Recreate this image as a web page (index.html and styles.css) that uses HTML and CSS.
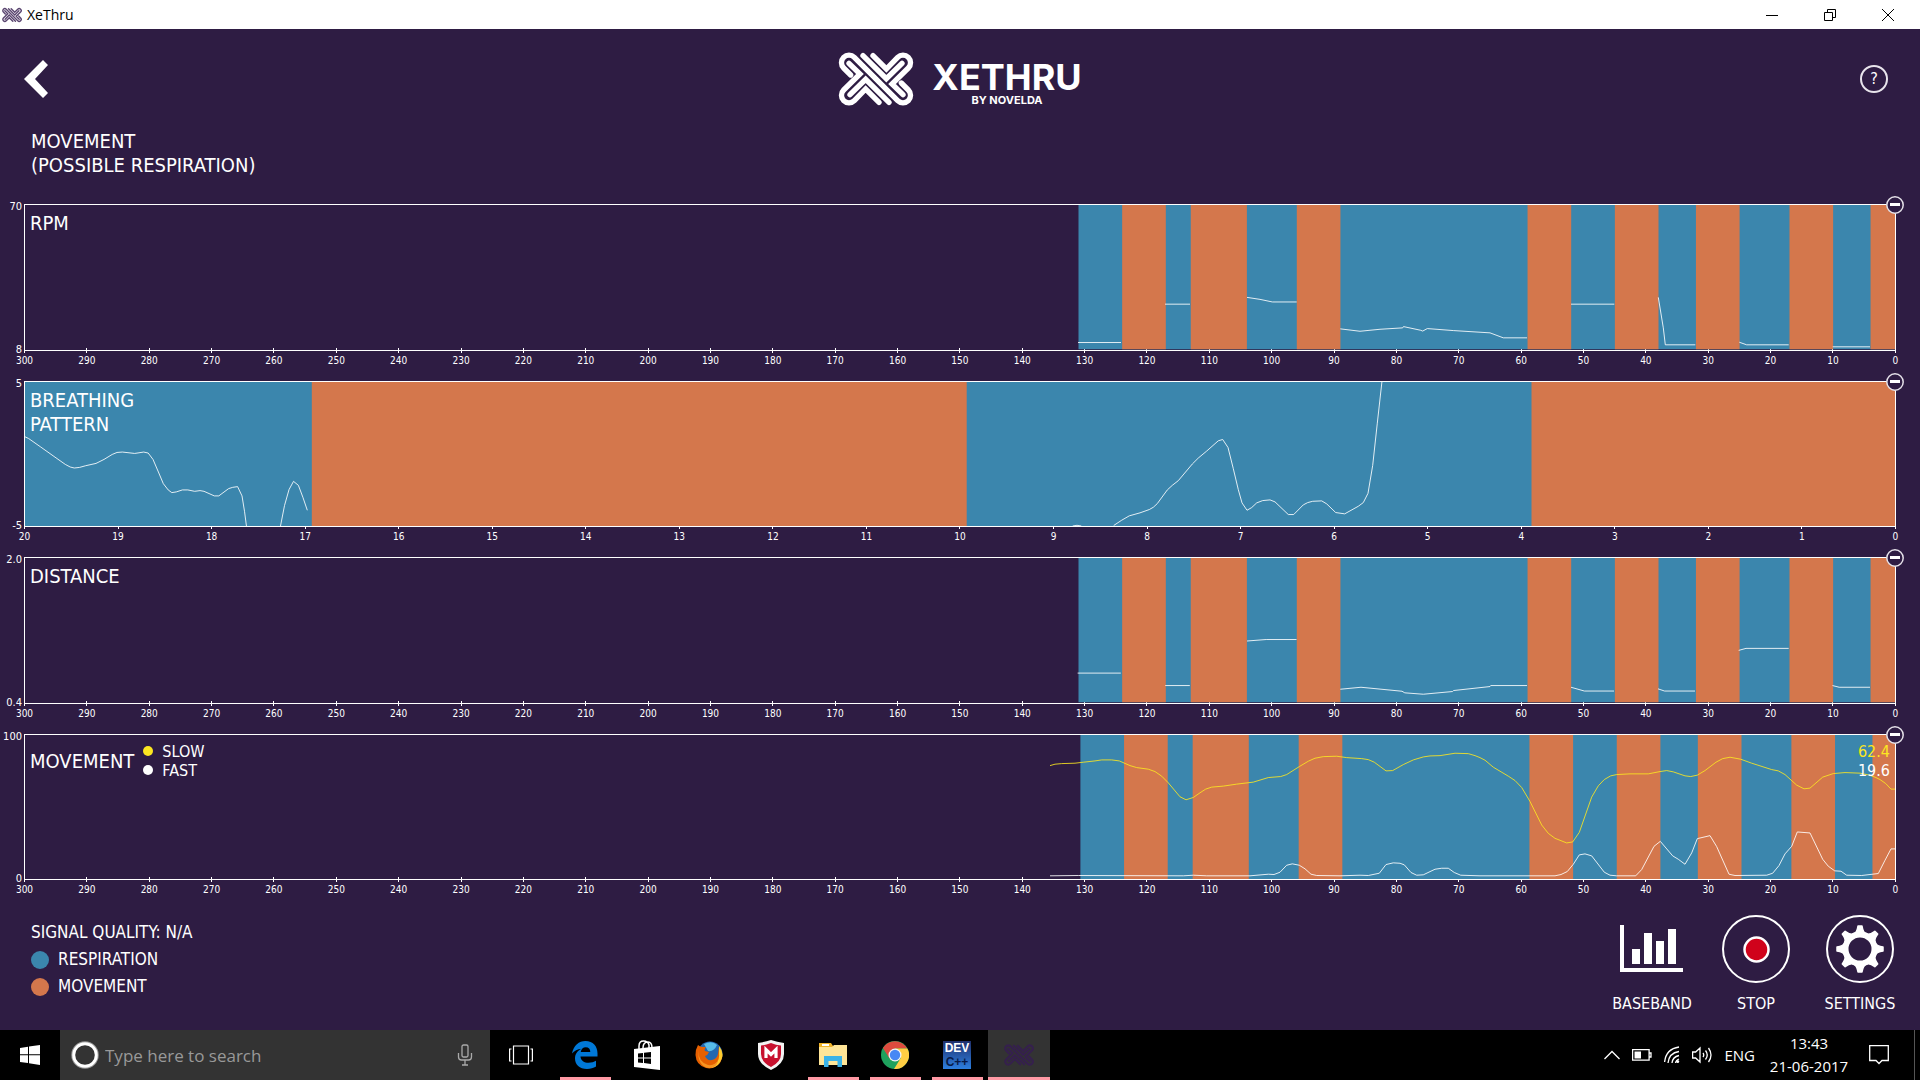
FILE: index.html
```html
<!DOCTYPE html>
<html lang="en">
<head>
<meta charset="utf-8">
<title>XeThru</title>
<link rel="stylesheet" href="styles.css">
</head>
<body>
<svg class="defs" aria-hidden="true">
  <symbol id="mark" viewBox="118 94 226 162">
    <g fill="none" stroke="currentColor" stroke-width="16" stroke-linecap="round" stroke-linejoin="miter">
      <path d="M155 163 134 142A22 22 0 0 1 166 110L296 240A22 22 0 0 0 328 208L307 187"/>
      <path d="M222 105 262 145 296 110A22 22 0 0 1 328 142L279 190 312 222"/>
      <path d="M240 245 200 205 166 240A22 22 0 0 1 134 208L183 160 150 128"/>
      <path d="M192 105 262 174 309 128M270 245 200 176 153 222"/>
    </g>
  </symbol>
  <symbol id="minus" viewBox="0 0 18 18">
    <circle cx="9" cy="9" r="8.2" fill="#2e1c43" stroke="#e4e0e8" stroke-width="1.5"/>
    <path d="M4 8.5h10" stroke="#fff" stroke-width="3"/>
  </symbol>
  <symbol id="bands" viewBox="1 0 1870 145" preserveAspectRatio="none">
    <g transform="translate(.5 0) scale(6.2367 1)">
      <path fill="#3b86ad" d="M169 0h131v145H169z"/>
      <path fill="#d4774c" d="M176 0h7v145h-7zM187 0h9v145h-9zM204 0h7v145h-7zM241 0h7v145h-7zM255 0h7v145h-7zM268 0h7v145h-7zM283 0h7v145h-7zM296 0h5v145h-5z"/>
    </g>
  </symbol>
</svg>

<header class="titlebar">
  <svg class="titlebar-icon"><use href="#mark"/></svg>
  <span class="titlebar-name">XeThru</span>
  <div class="window-controls">
    <button aria-label="Minimize"><svg width="12" height="12"><path d="M0 6.5h12"/></svg></button>
    <button aria-label="Restore"><svg width="12" height="12"><path d="M.5 3.5h8v8h-8zM3.5 3V.5h8v8H9"/></svg></button>
    <button aria-label="Close"><svg width="12" height="12"><path d="M0 0 12 12M12 0 0 12"/></svg></button>
  </div>
</header>

<main class="app">
  <div class="topbar">
    <button class="back" aria-label="Back"><svg width="24" height="38" viewBox="0 0 24 38"><path d="M24 5 19 0 0 19 19 38 24 33 11 19z" fill="#fff"/></svg></button>
    <div class="brand">
      <svg class="brand-mark"><use href="#mark"/></svg>
      <div class="brand-text"><span class="brand-name">XETHRU</span><span class="brand-by">BY NOVELDA</span></div>
    </div>
    <button class="help" aria-label="Help">?</button>
  </div>
  <h1 class="state">MOVEMENT<br>(POSSIBLE RESPIRATION)</h1>

  <div class="charts">
    <section class="chart">
      <div class="scale"><span>70</span><span>8</span></div>
      <div class="plot">
        <svg class="fill"><use href="#bands"/></svg>
        <svg class="fill" viewBox="1 1 1870 145" preserveAspectRatio="none">
          <path class="line" d="M1054 139H1097M1141 100.5H1166M1223 93.7 1236 95.7 1248.3 98.3H1272.7M1316.3 125.3 1336 127.7 1356 125.7 1378.7 124.3 1379.5 123 1396.7 126.7 1398.7 127.5 1403.3 125 1429.3 127 1466 129.3 1479.3 134.3H1503M1547 100.5H1590.3M1634.3 93.7 1639.3 124.3 1641.3 141.3H1671.3M1715.3 138.7 1722.7 141.3H1764.7M1808.7 143.3H1846"/>
        </svg>
        <h2 class="chart-title">RPM</h2>
      </div>
      <button class="collapse" aria-label="Collapse RPM"><svg><use href="#minus"/></svg></button>
      <ol class="axis"><li>300</li><li>290</li><li>280</li><li>270</li><li>260</li><li>250</li><li>240</li><li>230</li><li>220</li><li>210</li><li>200</li><li>190</li><li>180</li><li>170</li><li>160</li><li>150</li><li>140</li><li>130</li><li>120</li><li>110</li><li>100</li><li>90</li><li>80</li><li>70</li><li>60</li><li>50</li><li>40</li><li>30</li><li>20</li><li>10</li><li>0</li></ol>
    </section>

    <section class="chart">
      <div class="scale"><span>5</span><span>-5</span></div>
      <div class="plot">
        <svg class="fill" viewBox="1 1 1870 145" preserveAspectRatio="none">
          <path fill="#3b86ad" d="M0 0h1872v147H0z"/>
          <path fill="#d4774c" d="M287.8 0H942.7V147H287.8zM1507.5 0H1872V147H1507.5z"/>
          <path class="line" d="M1 56 4.6 57.7 16.8 66.3 29 75 41.3 83.7 46.2 86.3 50.3 87.3 55.6 86.7 61.7 85 72 82.7 80 78.7 88.2 73.7 93 71.7 98.4 71.3 110.7 72.7 119.7 71.3 124.2 72.3 129 78.7 134.4 91.3 139.3 103 144.2 109.3 147.8 112 152.3 111.3 158.4 109.3 163.8 109.3 170.7 110.7 176 110 180 110.7 190.3 115.3 194.8 115.3 204.6 108 208.7 106.7 213.6 106 218 115.3 220.5 130.7 222.5 146M256.4 146 260.5 125 265 109 269.5 100.7 274.4 104.7 278.9 116.7 283.3 129.7M1048.7 145.5 1053 144.8 1057.3 145.5M1089.7 145 1097.7 139.7 1105.3 135.3 1116 132.3 1125.3 129 1129.3 126.7 1133.3 123 1143.3 109.3 1148.3 104.7 1154.3 100 1168.3 83.3 1174.3 77.3 1182.7 70.3 1194.3 60 1198.7 58.7 1204 66.7 1209.3 88 1214.3 109 1218 122.3 1223 129.7 1227.7 127 1232.7 122.3 1238.7 120 1246 119.3 1251 121.3 1264.3 134 1269.7 134 1279.3 124.3 1283.7 122 1288.7 120.7 1297.7 120.3 1302.7 123.3 1311.7 132 1320.7 133.3 1334.3 125.7 1339.3 122 1344 112.7 1348.7 84.7 1353.3 42.3 1358 0"/>
        </svg>
        <h2 class="chart-title">BREATHING<br>PATTERN</h2>
      </div>
      <button class="collapse" aria-label="Collapse breathing pattern"><svg><use href="#minus"/></svg></button>
      <ol class="axis"><li>20</li><li>19</li><li>18</li><li>17</li><li>16</li><li>15</li><li>14</li><li>13</li><li>12</li><li>11</li><li>10</li><li>9</li><li>8</li><li>7</li><li>6</li><li>5</li><li>4</li><li>3</li><li>2</li><li>1</li><li>0</li></ol>
    </section>

    <section class="chart">
      <div class="scale"><span>2.0</span><span>0.4</span></div>
      <div class="plot">
        <svg class="fill"><use href="#bands"/></svg>
        <svg class="fill" viewBox="1 1 1870 145" preserveAspectRatio="none">
          <path class="line" d="M1053.6 116.5H1096.8M1141.2 129H1165.8M1223 84.3 1242.2 82.8H1272.5M1316.3 132.7 1337 130.7 1378 134.7 1380.8 136.3 1399.3 137.7 1428.5 135 1429.6 134 1466 130 1466.7 129H1503M1547 130.7 1560.4 134.5H1590M1634 132.3 1640.6 134.5H1671M1714.7 93.7 1722 91.7H1764.7M1808.5 129 1815.2 130.7H1846"/>
        </svg>
        <h2 class="chart-title">DISTANCE</h2>
      </div>
      <button class="collapse" aria-label="Collapse distance"><svg><use href="#minus"/></svg></button>
      <ol class="axis"><li>300</li><li>290</li><li>280</li><li>270</li><li>260</li><li>250</li><li>240</li><li>230</li><li>220</li><li>210</li><li>200</li><li>190</li><li>180</li><li>170</li><li>160</li><li>150</li><li>140</li><li>130</li><li>120</li><li>110</li><li>100</li><li>90</li><li>80</li><li>70</li><li>60</li><li>50</li><li>40</li><li>30</li><li>20</li><li>10</li><li>0</li></ol>
    </section>

    <section class="chart">
      <div class="scale"><span>100</span><span>0</span></div>
      <div class="plot">
        <svg class="fill" viewBox="1 1 1870 145" preserveAspectRatio="none">
          <g transform="translate(2.4 0) scale(6.2367 1)">
            <path fill="#3b86ad" d="M169 0h131v147H169z"/>
            <path fill="#d4774c" d="M176 0h7v147h-7zM187 0h9v147h-9zM204 0h7v147h-7zM241 0h7v147h-7zM255 0h7v147h-7zM268 0h7v147h-7zM283 0h7v147h-7zM296 0h5v147h-5z"/>
          </g>
          <path class="line" d="M1026 142.3 1054.3 142 1159.3 142.3 1169.3 141.7 1182.7 142.3 1226 142.3 1244.3 140.7 1250 141 1256 138.7 1262.7 131.7 1268.3 130.3 1275.3 131.7 1281 135.3 1287 140.7 1292.7 142 1316 142.3 1336 141.7 1344.3 142 1355.3 139.7 1362 131 1369.3 129.3 1376 129.7 1380.3 131.3 1387 139 1392.7 141.7 1399.3 141.3 1411 135.7 1417.7 134.7 1424.3 134.7 1430.3 139 1436.7 141.7 1456 142.3 1531 142.3 1537 141 1543.3 138 1549.3 130.7 1555.3 121.3 1561 120.3 1567.7 122.3 1580.3 138.7 1586 141.7 1592.7 142.3 1611.7 142.3 1617.7 136 1630 112.7 1636.3 107.7 1648.7 122.3 1654.3 125.7 1661 130.7 1667.7 119.3 1673.3 105 1686 102 1692.7 113 1705 140.7 1711 142 1742.7 141.7 1748.7 139.7 1755 132 1761 120.3 1767.7 112.7 1773.3 98.3 1786 99.3 1798.7 125.7 1804.3 132.7 1810.7 137.3 1817 137.7 1822.7 141.7 1837.7 142 1854.3 140 1861 126.7 1867 115.3 1871 115.3"/>
          <path class="line line-slow" d="M1026 31.7 1031 30.3 1037.7 29.7 1051 29.3 1059.3 28.3 1071 27 1077.7 26 1087.7 26 1095.3 27 1106 31.7 1112.7 33.7 1124.3 35.3 1131 37.7 1137.7 42.3 1144.3 49 1156 63 1162 66 1169.3 63.7 1176 59 1181.7 55.3 1187.7 53.3 1199.3 52.3 1212.7 50.3 1229.3 48.3 1244.3 43.7 1256.7 42.7 1262.7 40.7 1275.3 32.7 1284.3 27.3 1291 24.3 1299.3 22.7 1312.7 22.3 1322.7 23.7 1337.7 24.7 1344.3 25.7 1350.3 28.3 1362 37 1368.7 36.7 1379.3 30.7 1389.3 26 1399.3 23 1406 22 1416 21.7 1431 19.3 1444.3 19.7 1451 21.7 1456 23.7 1461 26.3 1469.3 33.3 1484.3 42.3 1491 46.7 1497.7 53.7 1506 67.7 1517.7 91.3 1524.3 99.7 1531 104.7 1542.7 109.3 1548.7 108.3 1555.3 98.7 1567.7 63.3 1574.3 52 1580.3 45.7 1586.7 42 1592.7 40.7 1606 40 1624.3 40 1636 37.7 1642.7 36.7 1649.3 38 1661 42 1666.7 42.7 1673.3 41.3 1681 36.7 1692 28.3 1698.7 24.7 1706 23.3 1716.7 25.3 1727.7 29.3 1747.7 35.7 1754.3 37 1761 40.7 1772.7 51.3 1780 55 1786 54.3 1798.7 43.3 1809.3 39.7 1821 38.7 1836 39.3 1844.3 41 1851 43.3 1856 45.7 1861.7 49.7 1867 55.3 1871 55.3"/>
        </svg>
        <div class="plot-head">
          <h2 class="plot-head-title">MOVEMENT</h2>
          <ul class="series">
            <li><i class="dot dot-slow"></i>SLOW</li>
            <li><i class="dot dot-fast"></i>FAST</li>
          </ul>
          <div class="readout"><span class="readout-slow">62.4</span><span>19.6</span></div>
        </div>
      </div>
      <button class="collapse" aria-label="Collapse movement"><svg><use href="#minus"/></svg></button>
      <ol class="axis"><li>300</li><li>290</li><li>280</li><li>270</li><li>260</li><li>250</li><li>240</li><li>230</li><li>220</li><li>210</li><li>200</li><li>190</li><li>180</li><li>170</li><li>160</li><li>150</li><li>140</li><li>130</li><li>120</li><li>110</li><li>100</li><li>90</li><li>80</li><li>70</li><li>60</li><li>50</li><li>40</li><li>30</li><li>20</li><li>10</li><li>0</li></ol>
    </section>
  </div>

  <footer class="bottom">
    <ul class="legend">
      <li>SIGNAL QUALITY: N/A</li>
      <li><i class="key key-resp"></i>RESPIRATION</li>
      <li><i class="key key-move"></i>MOVEMENT</li>
    </ul>
    <div class="actions">
      <button class="action">
        <svg width="68" height="68" viewBox="0 0 68 68" fill="#fff"><path d="M2 10h4v43h59v4H2zM14 34h8v15h-8zM26 18h8v31h-8zM38 26h8v23h-8zM50 14h8v35h-8z"/></svg>
        <span>BASEBAND</span>
      </button>
      <button class="action">
        <svg width="68" height="68" viewBox="0 0 68 68"><circle cx="34" cy="34" r="33" fill="none" stroke="#fff" stroke-width="2"/><circle cx="34.500" cy="34.500" r="12" fill="#d0021b" stroke="#fff" stroke-width="2.500"/></svg>
        <span>STOP</span>
      </button>
      <button class="action">
        <svg width="68" height="68" viewBox="0 0 68 68"><circle cx="34" cy="34" r="33" fill="none" stroke="#fff" stroke-width="2"/><circle cx="34" cy="34" r="14.500" fill="none" stroke="#fff" stroke-width="6"/>
          <g fill="#fff" stroke="#fff" stroke-width="1.500" stroke-linejoin="round"><path id="tooth" d="M28 18.500Q31 17.500 32 11h4Q37 17.500 40 18.500z"/><use href="#tooth" transform="rotate(45 34 34)"/><use href="#tooth" transform="rotate(90 34 34)"/><use href="#tooth" transform="rotate(135 34 34)"/><use href="#tooth" transform="rotate(180 34 34)"/><use href="#tooth" transform="rotate(225 34 34)"/><use href="#tooth" transform="rotate(270 34 34)"/><use href="#tooth" transform="rotate(315 34 34)"/></g></svg>
        <span>SETTINGS</span>
      </button>
    </div>
  </footer>
</main>

<nav class="taskbar">
  <button class="start" aria-label="Start"><svg width="20" height="20" viewBox="0 0 20 20" fill="#fff"><path d="M0 3 8 1.800V9.300H0zM9 1.600 20 0V9.300H9zM0 10.300H8V18L0 17zM9 10.300H20V20L9 18.300z"/></svg></button>
  <div class="search">
    <svg width="28" height="28" viewBox="0 0 28 28"><circle cx="14" cy="14" r="13" fill="none" stroke="#999" stroke-width="1.500"/><circle cx="14" cy="14" r="11.300" fill="none" stroke="#fff" stroke-width="3"/></svg>
    <input type="text" placeholder="Type here to search" aria-label="Type here to search">
    <svg width="16" height="22" viewBox="0 0 16 22" fill="none" stroke="#aaa" stroke-width="1.300"><rect x="5" y="1" width="6" height="12" rx="1.500"/><path d="M1.500 9v4q0 3 3 3h7q3 0 3-3V9M8 16v5M5 21h6"/></svg>
  </div>
  <button class="app-btn task-view" aria-label="Task view"><svg width="24" height="20" viewBox="0 0 24 20" fill="none" stroke="#fff" stroke-width="1.200"><path d="M4.500 1h15v18h-15zM2.500 4H.6v12h1.900M21.500 4h1.900v12h-1.900"/></svg></button>
  <button class="app-btn app-open" aria-label="Edge"><svg width="26" height="28" viewBox="0 0 26 28"><path fill="#0078d7" d="M0 12.500C1.500 4.500 7 0 13.500 0 21 0 25.500 5 25.500 12.500v3H8.500c.2 4.200 3.800 6.300 8 6.300 3 0 5.500-.8 7.500-2v5.800C21.500 27.200 18.500 28 15 28 7.500 28 3 23.500 3 17.500c0-4.500 2.500-8 6.500-9.800C5.500 7.800 2.300 9.700 0 12.500zM8.700 11h9.600c0-3-1.600-4.700-4.500-4.700S9.300 8.200 8.700 11z"/></svg></button>
  <button class="app-btn" aria-label="Store"><svg width="28" height="30" viewBox="0 0 28 30"><path fill="#fff" d="M1 9 27 6v24L1 27z"/><path fill="none" stroke="#fff" stroke-width="1.500" d="M6 10V6q0-5 4.500-5T16 5v4M10 8q0-6 5-6 4 0 4 6"/><path d="M5 13.500 10 13v4.500H5zM11 12.800 18 12v5.500h-7zM5 18.500h5V23l-5-.5zM11 18.500h7V24l-7-.9z"/></svg></button>
  <button class="app-btn" aria-label="Firefox"><svg width="28" height="28" viewBox="0 0 28 28"><circle cx="15" cy="13" r="12.500" fill="#2368b0"/><path fill="#57bce8" d="M9 3Q17-1 22 4q-3 7-9 6z"/><path fill="#e66000" d="M3 4q2 2 5 2l3 0q-2 2-1 4l4 1q-1 3-4 4 2 5 7 4 5-1 6-6l1-7Q30 14 25 22 19 29 11 27 1 24 .5 14 .5 8 3 4z"/><path fill="#ffcb2d" d="M24 5q5 6 3 12-3 9-11 10 9-5 8-14z"/><path fill="#f79420" d="M3 9q0 12 10 15 7 1 10-5-1 8-9 8Q3 26 3 9z"/></svg></button>
  <button class="app-btn" aria-label="McAfee"><svg width="28" height="30" viewBox="0 0 28 30"><path fill="#f3f3f3" d="M1 3Q8 2 14 0 20 2 27 3V14Q27 24 14 30 1 24 1 14z"/><path fill="#c8102e" d="M4 5.500Q9 5 14 3 19 5 24 5.500V14Q24 22 14 27 4 22 4 14z"/><path fill="none" stroke="#fff" stroke-width="3.200" d="M9 18V9.500L14 14.500 19 9.500V18"/></svg></button>
  <button class="app-btn app-open" aria-label="File Explorer"><svg width="28" height="24" viewBox="0 0 28 24"><path fill="#f0b429" d="M0 0h12l2 3h14v3H0z"/><path fill="#ffe597" d="M0 4h13l2-2h13v20H0z"/><path fill="#fff" d="M3 1h7v2H3z"/><path fill="#3bb3e8" d="M5 13h18v11h-4.500v-6h-9v6H5z"/></svg></button>
  <button class="app-btn app-open" aria-label="Chrome"><svg width="28" height="28" viewBox="0 0 28 28"><circle cx="14" cy="14" r="14" fill="#1fa15d"/><path fill="#dd4b3e" d="M1.900 7A14 14 0 0 1 26.100 7.500H14L8.500 17.500z"/><path fill="#ffce43" d="M14 7.500H26.400A14 14 0 0 1 13 28L19.800 17z"/><circle cx="14" cy="14" r="6.500" fill="#f4f4f4"/><circle cx="14" cy="14" r="5.200" fill="#4688f4"/></svg></button>
  <button class="app-btn app-open" aria-label="Dev-C++"><span class="dev"><b>DEV</b><b class="dev-c">C++</b></span></button>
  <button class="app-btn app-open app-active" aria-label="XeThru"><svg class="app-mark"><use href="#mark"/></svg></button>

  <div class="tray">
    <svg width="16" height="10" viewBox="0 0 16 10"><path d="M.5 9 8 1.500 15.500 9"/></svg>
    <svg width="20" height="12" viewBox="0 0 20 12"><path d="M.6.600h16.500v10.500H.6zM17.500 4h1.500v4h-1.500"/><path fill="#fff" stroke="none" d="M2.500 2.500h6.500v7H2.500z"/></svg>
    <svg width="16" height="18" viewBox="0 0 16 18"><path d="M.6 16Q2 3 15 1M4 17Q5 7 15 5.500M8 17Q8.500 11 15 9.500M11.500 17Q12 14 15 13"/><circle cx="13.700" cy="15.500" r="1.500" fill="#fff" stroke="none"/></svg>
    <svg width="20" height="18" viewBox="0 0 20 18"><path d="M.6 6h3L8 2v14l-4.400-4H.6zM11 7q1.500 2 0 4M13.500 4.500q3.500 4.500 0 9M16.500 2q5 7 0 14"/></svg>
    <span class="lang">ENG</span>
    <div class="clock"><span>13:43</span><span>21-06-2017</span></div>
    <svg width="20" height="20" viewBox="0 0 20 20"><path d="M.7.700h18.600V15.500H13L10 18.500 7 15.500H.7z"/></svg>
  </div>
</nav>
</body>
</html>
```
FILE: styles.css
```css
* { box-sizing: border-box; }

body {
  margin: 0;
  min-height: 100vh;
  display: flex;
  flex-direction: column;
  background: #2e1c43;
  color: #fff;
  font-family: "DejaVu Sans Condensed", "DejaVu Sans", sans-serif;
  font-size: 16px;
}

button {
  padding: 0;
  border: 0;
  background: none;
  color: inherit;
  font: inherit;
}

h1, h2, ul, ol { margin: 0; padding: 0; font-weight: normal; }
ul, ol { list-style: none; }
svg { display: block; flex: none; }
.defs { position: absolute; width: 0; height: 0; }

/* Window title bar */
.titlebar {
  display: flex;
  align-items: center;
  height: 29px;
  padding: 0 3px 0 2px;
  background: #fff;
  color: #000;
  font-family: "Open Sans", sans-serif;
  font-size: 14px;
}
.titlebar-icon { width: 20px; height: 16px; margin-right: 5px; color: #5a4570; }
.window-controls { display: flex; margin-left: auto; }
.window-controls button {
  display: flex;
  align-items: center;
  justify-content: center;
  width: 58px;
  height: 28px;
}
.window-controls svg { fill: none; stroke: #000; }

/* App header */
.app { flex: 1; display: flex; flex-direction: column; }
.topbar {
  display: grid;
  grid-template-columns: 1fr auto 1fr;
  align-items: center;
  height: 100px;
  padding: 0 24px;
}
.back { justify-self: start; }
.brand { display: flex; align-items: center; gap: 18px; }
.brand-mark { width: 76px; height: 54px; }
.brand-text {
  display: flex;
  flex-direction: column;
  align-items: center;
  padding-top: 10px;
  font-family: Inter, sans-serif;
  font-weight: 700;
}
.brand-name { font-size: 36px; line-height: 32px; }
.brand-by { font-size: 11px; line-height: 14px; }
.help {
  justify-self: end;
  width: 28px;
  height: 28px;
  margin-right: 8px;
  border: 2px solid #e8e4ec;
  border-radius: 50%;
  line-height: 24px;
}
.state { height: 75px; padding-left: 31px; font-size: 20px; line-height: 24px; }

/* Charts */
.charts { flex: 1; display: grid; grid-template-rows: repeat(4, 1fr); }
.chart {
  position: relative;
  display: grid;
  grid-template-columns: 24px 1fr 24px;
  grid-template-rows: 1fr 30px;
}
.scale {
  display: flex;
  flex-direction: column;
  justify-content: space-between;
  margin: -3px 0 -5px;
  padding-right: 2px;
  font-size: 11px;
  line-height: 12px;
  text-align: right;
}
.plot { position: relative; border: 1px solid #fff; }
.fill { position: absolute; width: 100%; height: 100%; }
.line { fill: none; stroke: #fff; stroke-opacity: .85; vector-effect: non-scaling-stroke; }
.line-slow { stroke: #fce621; }
.chart-title {
  position: relative;
  padding: 6px 5px;
  font-size: 20px;
  line-height: 24px;
}
.plot-head { position: relative; display: flex; align-items: center; padding: 7px 5px; }
.plot-head-title { font-size: 20px; line-height: 24px; }
.series { margin-left: 9px; line-height: 19px; }
.series li { display: flex; align-items: center; gap: 9px; }
.dot { width: 10px; height: 10px; border-radius: 50%; background: #fff; }
.dot-slow { background: #fce621; }
.readout { display: flex; flex-direction: column; margin-left: auto; line-height: 19px; }
.readout-slow { color: #fce621; }
.collapse { position: absolute; top: -8px; right: 16px; }
.collapse svg { width: 18px; height: 18px; }
.axis {
  grid-column: 2;
  display: flex;
  justify-content: space-between;
  margin-top: -3px;
  font-size: 10px;
  line-height: 12px;
}
.axis li { display: flex; flex-direction: column; align-items: center; width: 1px; gap: 2px; }
.axis li::before { content: ""; width: 1px; height: 5px; background: #fff; }

/* Footer */
.bottom { display: flex; justify-content: space-between; height: 120px; padding: 5px 8px 0 31px; }
.legend { padding-top: 4px; font-size: 17px; line-height: 27px; }
.legend li { display: flex; align-items: center; gap: 9px; }
.key { width: 18px; height: 18px; border-radius: 50%; }
.key-resp { background: #3b86ad; }
.key-move { background: #d4774c; }
.actions { display: flex; }
.action {
  display: flex;
  flex-direction: column;
  align-items: center;
  gap: 11px;
  width: 104px;
  line-height: 20px;
}

/* Taskbar */
.taskbar {
  display: flex;
  height: 50px;
  background: #000;
  font-family: "Open Sans", sans-serif;
}
.start { display: flex; align-items: center; justify-content: center; width: 60px; }
.search {
  display: flex;
  align-items: center;
  gap: 6px;
  width: 430px;
  padding: 0 17px 0 11px;
  background: #333;
}
.search input {
  flex: 1;
  min-width: 0;
  padding: 0;
  border: 0;
  background: none;
  color: #fff;
  font: 17px "Open Sans", sans-serif;
}
.search input::placeholder { color: #999; }
.app-btn {
  position: relative;
  display: flex;
  align-items: center;
  justify-content: center;
  width: 62px;
}
.task-view { margin-right: 2px; }
.app-open::after {
  content: "";
  position: absolute;
  bottom: 0;
  left: 6px;
  right: 5px;
  height: 3px;
  background: #ff99a4;
}
.app-active { background: #333; }
.app-active::after { left: 0; right: 0; }
.app-mark { width: 30px; height: 22px; color: #35204d; }
.dev {
  display: flex;
  flex-direction: column;
  align-items: center;
  width: 28px;
  height: 28px;
  background: linear-gradient(#20306c, #2d7fe0);
  font-family: "Liberation Sans", sans-serif;
  font-size: 12px;
  line-height: 14px;
}
.dev-c { color: #071a48; }
.tray {
  display: flex;
  align-items: center;
  gap: 12px;
  margin: 0 5px 0 auto;
  padding-right: 25px;
  border-right: 1px solid #555;
}
.tray svg { fill: none; stroke: #fff; stroke-width: 1.3px; }
.lang { font-size: 15px; }
.clock {
  display: flex;
  flex-direction: column;
  align-items: center;
  width: 84px;
  margin-right: 6px;
  font-size: 15px;
  line-height: 23px;
}
```
